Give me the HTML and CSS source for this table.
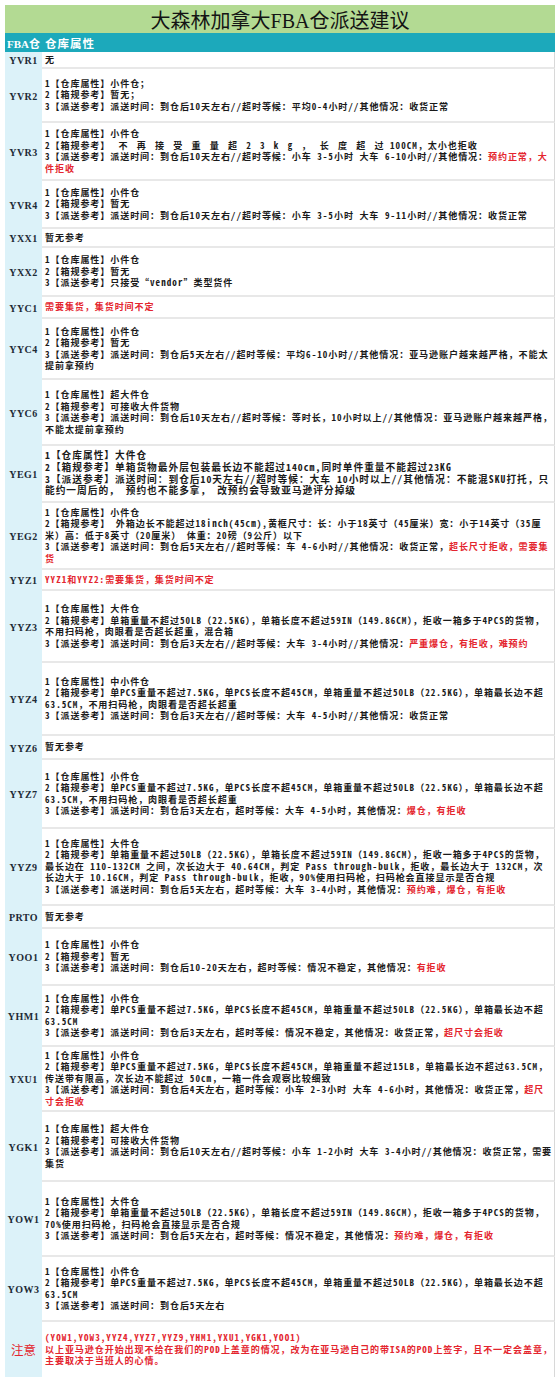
FILE: index.html
```html
<!DOCTYPE html>
<html lang="zh-CN">
<head>
<meta charset="utf-8">
<title>大森林加拿大FBA仓派送建议</title>
<link rel="stylesheet" href="styles.css">
<script src="script.js" defer></script>
</head>
<body>
<main class="sheet">
  <h1 class="title">大森林加拿大FBA仓派送建议</h1>
  <div class="head-code">FBA仓</div>
  <div class="head-info">仓库属性</div>

  <div class="code">YVR1</div>
  <div class="info"><p>无</p></div>

  <div class="code">YVR2</div>
  <div class="info">
    <p>1【仓库属性】小件仓；</p>
    <p>2【箱规参考】暂无；</p>
    <p>3【派送参考】派送时间：到仓后10天左右//超时等候：平均0-4小时//其他情况：收货正常</p>
  </div>

  <div class="code">YVR3</div>
  <div class="info">
    <p>1【仓库属性】小件仓</p>
    <p>2【箱规参考】<span class="spaced"> 不 再 接 受 重 量 超 2 3 k g ， 长 度 超 过</span> 100CM，太小也拒收</p>
    <p>3【派送参考】派送时间：到仓后10天左右//超时等候：小车 3-5小时 大车 6-10小时//其他情况：<span class="red">预约正常，大件拒收</span></p>
  </div>

  <div class="code">YVR4</div>
  <div class="info">
    <p>1【仓库属性】小件仓</p>
    <p>2【箱规参考】暂无</p>
    <p>3【派送参考】派送时间：到仓后10天左右//超时等候：小车 3-5小时 大车 9-11小时//其他情况：收货正常</p>
  </div>

  <div class="code">YXX1</div>
  <div class="info"><p>暂无参考</p></div>

  <div class="code">YXX2</div>
  <div class="info">
    <p>1【仓库属性】小件仓</p>
    <p>2【箱规参考】暂无</p>
    <p>3【派送参考】只接受“vendor”类型货件</p>
  </div>

  <div class="code">YYC1</div>
  <div class="info"><p class="red">需要集货，集货时间不定</p></div>

  <div class="code">YYC4</div>
  <div class="info">
    <p>1【仓库属性】小件仓</p>
    <p>2【箱规参考】暂无</p>
    <p>3【派送参考】派送时间：到仓后5天左右//超时等候：平均6-10小时//其他情况：亚马逊账户越来越严格，不能太提前拿预约</p>
  </div>

  <div class="code">YYC6</div>
  <div class="info">
    <p>1【仓库属性】超大件仓</p>
    <p>2【箱规参考】可接收大件货物</p>
    <p>3【派送参考】派送时间：到仓后10天左右//超时等候：等时长，10小时以上//其他情况：亚马逊账户越来越严格，不能太提前拿预约</p>
  </div>

  <div class="code">YEG1</div>
  <div class="info large">
    <p>1【仓库属性】大件仓</p>
    <p>2【箱规参考】单箱货物最外层包装最长边不能超过140cm,同时单件重量不能超过23KG</p>
    <p>3【派送参考】派送时间：到仓后10天左右//超时等候：大车 10小时以上//其他情况：不能混SKU打托，只能约一周后的， 预约也不能多拿， 改预约会导致亚马逊评分掉级</p>
  </div>

  <div class="code">YEG2</div>
  <div class="info">
    <p>1【仓库属性】小件仓</p>
    <p>2【箱规参考】 外箱边长不能超过18inch(45cm),黄框尺寸：长：小于18英寸（45厘米）宽：小于14英寸（35厘米）高：低于8英寸（20厘米） 体重：20磅（9公斤）以下</p>
    <p>3【派送参考】派送时间：到仓后5天左右//超时等候：车 4-6小时//其他情况：收货正常，<span class="red">超长尺寸拒收，需要集货</span></p>
  </div>

  <div class="code">YYZ1</div>
  <div class="info"><p class="red">YYZ1和YYZ2:需要集货，集货时间不定</p></div>

  <div class="code">YYZ3</div>
  <div class="info">
    <p>1【仓库属性】大件仓</p>
    <p>2【箱规参考】单箱重量不超过50LB（22.5KG），单箱长度不超过59IN（149.86CM），拒收一箱多于4PCS的货物，不用扫码枪，肉眼看是否超长超重，混合箱</p>
    <p>3【派送参考】派送时间：到仓后3天左右//超时等候：大车 3-4小时//其他情况：<span class="red">严重爆仓，有拒收，难预约</span></p>
  </div>

  <div class="code">YYZ4</div>
  <div class="info">
    <p>1【仓库属性】中小件仓</p>
    <p>2【箱规参考】单PCS重量不超过7.5KG，单PCS长度不超45CM，单箱重量不超过50LB（22.5KG），单箱最长边不超63.5CM，不用扫码枪，肉眼看是否超长超重</p>
    <p>3【派送参考】派送时间：到仓后3天左右//超时等候：大车 4-5小时//其他情况：收货正常</p>
  </div>

  <div class="code">YYZ6</div>
  <div class="info"><p>暂无参考</p></div>

  <div class="code">YYZ7</div>
  <div class="info">
    <p>1【仓库属性】小件仓</p>
    <p>2【箱规参考】单PCS重量不超过7.5KG，单PCS长度不超45CM，单箱重量不超过50LB（22.5KG），单箱最长边不超63.5CM，不用扫码枪，肉眼看是否超长超重</p>
    <p>3【派送参考】派送时间：到仓后3天左右，超时等候：大车 4-5小时，其他情况：<span class="red">爆仓，有拒收</span></p>
  </div>

  <div class="code">YYZ9</div>
  <div class="info">
    <p>1【仓库属性】大件仓</p>
    <p>2【箱规参考】单箱重量不超过50LB（22.5KG），单箱长度不超过59IN（149.86CM），拒收一箱多于4PCS的货物，最长边在 110-132CM 之间，次长边大于 40.64CM，判定 Pass through-bulk，拒收，最长边大于 132CM，次长边大于 10.16CM，判定 Pass through-bulk，拒收，90%使用扫码枪，扫码枪会直接显示是否合规</p>
    <p>3【派送参考】派送时间：到仓后5天左右，超时等候：大车 3-4小时，其他情况：<span class="red">预约难，爆仓，有拒收</span></p>
  </div>

  <div class="code">PRTO</div>
  <div class="info"><p>暂无参考</p></div>

  <div class="code">YOO1</div>
  <div class="info">
    <p>1【仓库属性】小件仓</p>
    <p>2【箱规参考】暂无</p>
    <p>3【派送参考】派送时间：到仓后10-20天左右，超时等候：情况不稳定，其他情况：<span class="red">有拒收</span></p>
  </div>

  <div class="code">YHM1</div>
  <div class="info">
    <p>1【仓库属性】小件仓</p>
    <p>2【箱规参考】单PCS重量不超过7.5KG，单PCS长度不超45CM，单箱重量不超过50LB（22.5KG），单箱最长边不超63.5CM</p>
    <p>3【派送参考】派送时间：到仓后3天左右，超时等候：情况不稳定，其他情况：收货正常，<span class="red">超尺寸会拒收</span></p>
  </div>

  <div class="code">YXU1</div>
  <div class="info">
    <p>1【仓库属性】小件仓</p>
    <p>2【箱规参考】单PCS重量不超过7.5KG，单PCS长度不超45CM，单箱重量不超过15LB，单箱最长边不超过63.5CM，传送带有限高，次长边不能超过 50cm，一箱一件会观察比较细致</p>
    <p>3【派送参考】派送时间：到仓后4天左右，超时等候：小车 2-3小时 大车 4-6小时，其他情况：收货正常，<span class="red">超尺寸会拒收</span></p>
  </div>

  <div class="code">YGK1</div>
  <div class="info">
    <p>1【仓库属性】超大件仓</p>
    <p>2【箱规参考】可接收大件货物</p>
    <p>3【派送参考】派送时间：到仓后10天左右//超时等候：小车 1-2小时 大车 3-4小时//其他情况：收货正常，需要集货</p>
  </div>

  <div class="code">YOW1</div>
  <div class="info">
    <p>1【仓库属性】大件仓</p>
    <p>2【箱规参考】单箱重量不超过50LB（22.5KG），单箱长度不超过59IN（149.86CM），拒收一箱多于4PCS的货物，70%使用扫码枪，扫码枪会直接显示是否合规</p>
    <p>3【派送参考】派送时间：到仓后5天左右，超时等候：情况不稳定，其他情况：<span class="red">预约难，爆仓，有拒收</span></p>
  </div>

  <div class="code">YOW3</div>
  <div class="info">
    <p>1【仓库属性】小件仓</p>
    <p>2【箱规参考】单PCS重量不超过7.5KG，单PCS长度不超45CM，单箱重量不超过50LB（22.5KG），单箱最长边不超63.5CM</p>
    <p>3【派送参考】派送时间：到仓后5天左右</p>
  </div>

  <div class="code note">注意</div>
  <div class="info last red">
    <p>(YOW1,YOW3,YYZ4,YYZ7,YYZ9,YHM1,YXU1,YGK1,YOO1)</p>
    <p>以上亚马逊仓开始出现不给在我们的POD上盖章的情况，改为在亚马逊自己的带ISA的POD上签字，且不一定会盖章，主要取决于当班人的心情。</p>
  </div>
</main>
</body>
</html>
```
FILE: styles.css
```css
html, body {
  background: #ffffff;
}

body {
  margin: 5px 5px 0 5px;
  font-family: "Liberation Serif", "Noto Sans CJK SC", serif;
  color: #1a1a1a;
}

.sheet {
  width: 550px;
  display: grid;
  grid-template-columns: 37px 1fr;
  grid-template-rows:
    28px 19px
    17px 54px 58px 48px 19px 49px 22px 61px 66px 57px 67px 21px
    72px 73px 24px 69px 77px 23px 57px 61px 65px 70px 75px 65px 55px;
}

.title {
  grid-column: 1 / -1;
  margin: 0;
  background: #b3da93;
  color: #141414;
  font-size: 20px;
  font-weight: normal;
  display: flex;
  align-items: center;
  justify-content: center;
}

.head-code,
.head-info {
  background: #1ca9bb;
  color: #ffffff;
  font-weight: bold;
  display: flex;
  align-items: center;
}

.head-code {
  justify-content: center;
  font-size: 11px;
}

.head-info {
  font-family: "Noto Sans CJK SC", sans-serif;
  font-size: 11.5px;
  letter-spacing: 1px;
  padding-left: 3px;
}

.code {
  background: #dcf2f9;
  color: #1c2a36;
  font-size: 10px;
  font-weight: bold;
  letter-spacing: 0.5px;
  display: flex;
  align-items: center;
  justify-content: center;
}

.code.note {
  color: #e3262f;
  font-family: "Noto Sans CJK SC", sans-serif;
  font-size: 12.5px;
  font-weight: normal;
  letter-spacing: 0;
}

.info {
  display: flex;
  flex-direction: column;
  justify-content: center;
  padding: 0 1px 0 3px;
  border-bottom: 2px solid #e8e8e8;
  border-right: 1px solid #d8d8d8;
  font-family: "Noto Sans CJK SC", sans-serif;
  font-size: 9.05px;
  line-height: 11.5px;
  letter-spacing: 0.9px;
  font-weight: bold;
}

.info.large {
  font-size: 9.7px;
  letter-spacing: 1px;
  line-height: 11.7px;
}

.info.last {
  border-bottom: none;
}

.info p {
  margin: 0;
}

/* Latin runs: half-width forms, kept on one line box each */
.lat {
  display: inline-block;
  white-space: pre;
  letter-spacing: 1.05px;
  font-feature-settings: "hwid" 1;
}

.red {
  color: #e4252e;
}

.spaced {
  word-spacing: 2.7px;
}
```
FILE: script.js
```js
// Give Latin runs the half-width forms used by the spreadsheet font.
document.querySelectorAll('.info p').forEach(function (p) {
  var walker = document.createTreeWalker(p, NodeFilter.SHOW_TEXT);
  var nodes = [];
  while (walker.nextNode()) nodes.push(walker.currentNode);
  nodes.forEach(function (node) {
    var parts = node.nodeValue.split(/([\x20-\x7e]+)/);
    if (parts.length < 2) return;
    var frag = document.createDocumentFragment();
    parts.forEach(function (text, i) {
      if (!text) return;
      if (i % 2) {
        var span = document.createElement('span');
        span.className = 'lat';
        span.textContent = text;
        frag.appendChild(span);
      } else {
        frag.appendChild(document.createTextNode(text));
      }
    });
    node.parentNode.replaceChild(frag, node);
  });
});
```
